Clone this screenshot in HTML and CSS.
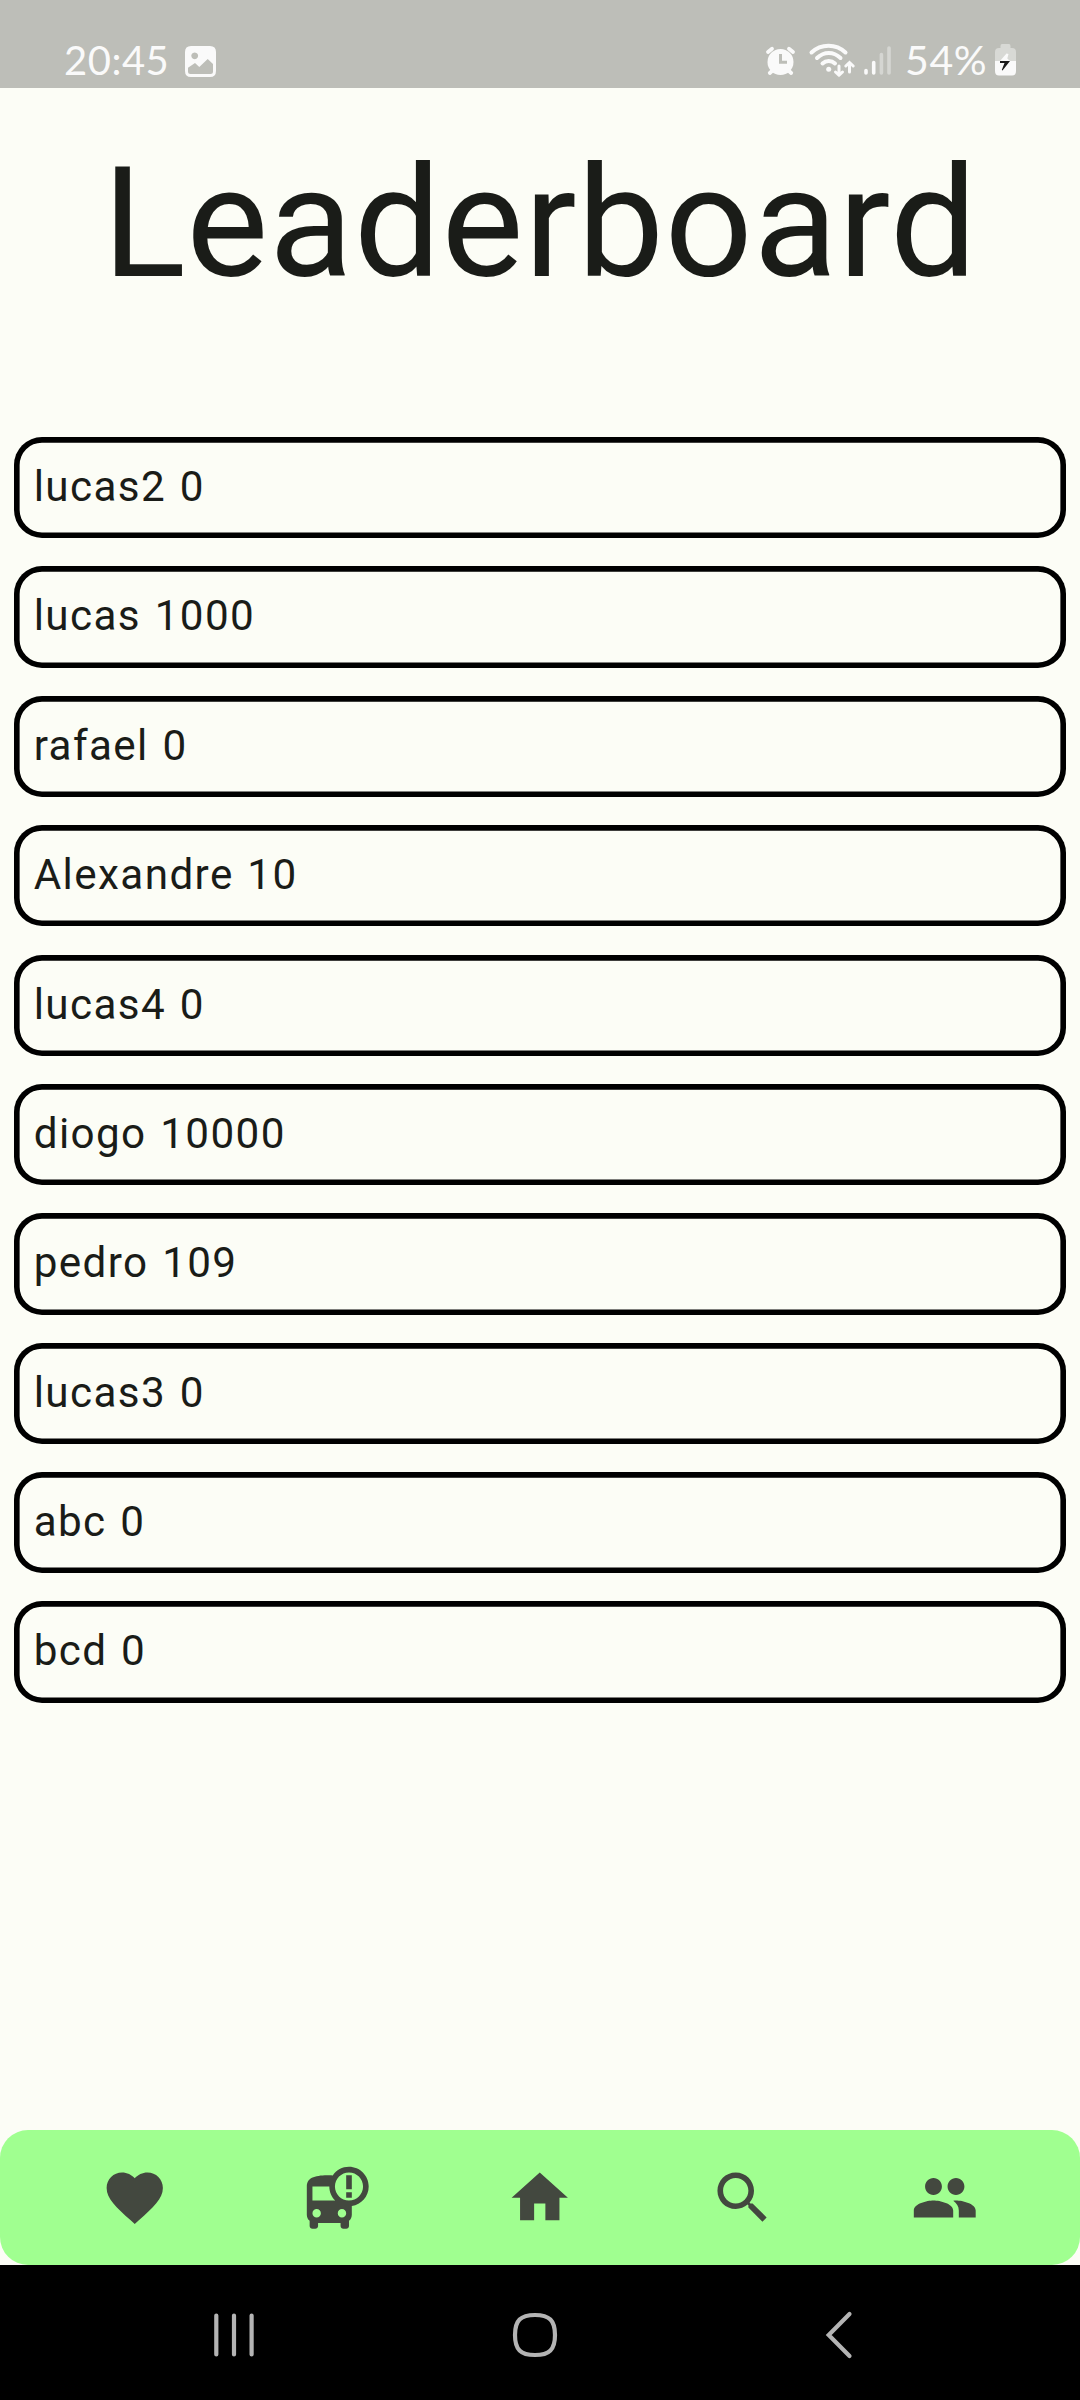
FILE: index.html
```html
<!DOCTYPE html>
<html lang="en">
<head>
<meta charset="utf-8">
<title>Leaderboard</title>
<link rel="stylesheet" href="styles.css">
</head>
<body>
<div class="screen">
  <header class="status">
    <div class="status-left">
      <span class="clock">20:45</span>
      <svg class="picture" width="31" height="31" viewBox="0 0 31 31">
        <path fill="#fafafa" fill-rule="evenodd" d="M6 0H25Q31 0 31 6V25Q31 31 25 31H6Q0 31 0 25V6Q0 0 6 0ZM9.700 6.400a3.400 3.400 0 1 0 .01 0ZM3 21.800V25.500Q3 28 5.500 28H25.500Q28 28 28 25.500V18L22.700 12.900L14.300 20.900L10 17Z"/>
      </svg>
    </div>
    <div class="status-right">
      <svg class="signals" width="128" height="36" viewBox="764 42 128 36" fill="none" stroke="#fafafa" stroke-linecap="round">
        <circle cx="780.500" cy="62" r="13" fill="#fafafa" stroke="none"/>
        <path stroke-width="3.800" d="M768 52L772 48.800M793 52L789 48.800M772 71L769.800 73M789 71L791.200 73"/>
        <path stroke="#bdbeb8" stroke-width="3" stroke-linecap="butt" d="M780.500 54V62.300H787"/>
        <path stroke-width="4" d="M811.500 52.500C821 43.500 836 43.500 845.500 52.500M817 58C824 51.300 833.500 51.300 840.500 58M822.500 63.500C826 60.200 831.500 60.200 835 63.500"/>
        <circle cx="828.700" cy="69.300" r="2.500" fill="#fafafa" stroke="none"/>
        <path stroke-width="3" d="M839 66V75M835.500 72L839 75.300L842.500 72M849.500 72V62.500M845.800 66L849.500 62.500L853.200 66"/>
        <path stroke-width="3.600" d="M866 70.500V73M873.700 62.500V73"/>
        <path stroke="#d5d6d2" stroke-width="3.600" d="M881.400 54.500V73M889 48V73"/>
      </svg>
      <span class="percent">54%</span>
      <svg class="battery" width="21" height="32" viewBox="0 0 21 32">
        <path fill="#d8d9d5" d="M7 0H14Q15.500 0 15.500 2V4H17Q21 4 21 8V17H0V8Q0 4 4 4H5.500V2Q5.500 0 7 0Z"/>
        <path fill="#fafafa" d="M0 17H21V27Q21 31.500 17 31.500H4Q0 31.500 0 27Z"/>
        <path fill="#fafafa" d="M11.500 9.500L5 17H15L12.300 14.500L13.500 10Z"/>
        <path fill="#1b1b1b" d="M5 17H15L7.500 26.500L6.800 26L9.500 19H5Z"/>
      </svg>
    </div>
  </header>
  <main class="content">
    <h1 class="title">Leaderboard</h1>
    <ul class="list">
      <li class="row">lucas2 0</li>
      <li class="row">lucas 1000</li>
      <li class="row">rafael 0</li>
      <li class="row">Alexandre 10</li>
      <li class="row">lucas4 0</li>
      <li class="row">diogo 10000</li>
      <li class="row">pedro 109</li>
      <li class="row">lucas3 0</li>
      <li class="row">abc 0</li>
      <li class="row">bcd 0</li>
    </ul>
  </main>
  <nav class="tabs">
    <a class="tab"><svg class="icon" viewBox="0 0 24 24"><path d="M12 21.350l-1.450-1.320C5.400 15.360 2 12.280 2 8.500 2 5.420 4.420 3 7.500 3c1.740 0 3.410.81 4.500 2.090C13.090 3.810 14.760 3 16.500 3 19.580 3 22 5.420 22 8.500c0 3.780-3.400 6.860-8.550 11.540L12 21.350z"/></svg></a>
    <a class="tab"><svg class="icon" viewBox="0 0 24 24"><path fill-rule="evenodd" d="M16 1c-2.400 0-4.520 1.210-5.780 3.050C9.840 4 9.420 4 9 4c-4.420 0-8 .5-8 4v10c0 .88.39 1.670 1 2.220V22c0 .55.45 1 1 1h1c.55 0 1-.45 1-1v-1h8v1c0 .55.45 1 1 1h1c.55 0 1-.45 1-1v-1.780c.61-.55 1-1.340 1-2.220v-3.080c3.390-.49 6-3.390 6-6.920 0-3.870-3.130-7-7-7zM4.500 19c-.83 0-1.500-.67-1.500-1.500S3.670 16 4.500 16s1.500.67 1.500 1.500S5.330 19 4.500 19zM3 13V8h6c0 1.960.81 3.730 2.110 5H3zm10.500 6c-.83 0-1.500-.67-1.500-1.500s.67-1.500 1.500-1.500 1.500.67 1.500 1.500-.67 1.500-1.500 1.500zM16 13c-2.760 0-5-2.240-5-5s2.240-5 5-5 5 2.240 5 5-2.240 5-5 5zM15 4h2v5h-2zM15 10h2v2h-2z"/></svg></a>
    <a class="tab"><svg class="icon" viewBox="0 0 24 24"><path d="M10 20v-6h4v6h5v-8h3L12 3 2 12h3v8z"/></svg></a>
    <a class="tab"><svg class="icon" viewBox="0 0 24 24"><path d="M15.500 14h-.79l-.28-.27C15.410 12.590 16 11.110 16 9.500 16 5.910 13.090 3 9.500 3S3 5.910 3 9.500 5.910 16 9.500 16c1.610 0 3.090-.59 4.230-1.570l.27.28v.79l5 4.990L20.490 19l-4.990-5zm-6 0C7.010 14 5 11.990 5 9.500S7.010 5 9.500 5 14 7.010 14 9.500 11.990 14 9.500 14z"/></svg></a>
    <a class="tab"><svg class="icon" viewBox="0 0 24 24"><path d="M16 11c1.660 0 2.990-1.340 2.990-3S17.660 5 16 5s-3 1.340-3 3 1.340 3 3 3zM8 11c1.660 0 2.990-1.340 2.990-3S9.660 5 8 5 5 6.340 5 8s1.340 3 3 3zM8 13c-2.330 0-7 1.170-7 3.500V19h14v-2.500c0-2.330-4.670-3.500-7-3.500zM16 13c-.29 0-.62.02-.97.05 1.160.84 1.970 1.970 1.970 3.450V19h6v-2.500c0-2.330-4.670-3.500-7-3.500z"/></svg></a>
  </nav>
  <footer class="system">
    <svg width="40" height="48" viewBox="214 2311 40 48" fill="none" stroke="#b4b4b4" stroke-width="4.200" stroke-linecap="round"><path d="M216.300 2315.500V2354.500M234 2315.500V2354.500M251.600 2315.500V2354.500"/></svg>
    <svg class="home-key" width="48" height="48" viewBox="0 0 48 48" fill="none" stroke="#b4b4b4" stroke-width="4.200"><path d="M24 4C38.500 4 44 9.500 44 24S38.500 44 24 44 4 38.500 4 24 9.500 4 24 4Z"/></svg>
    <svg width="28" height="48" viewBox="0 0 28 48" fill="none" stroke="#b4b4b4" stroke-width="4.200" stroke-linecap="round"><path d="M24.500 3L3.700 24L24.500 45"/></svg>
  </footer>
</div>
</body>
</html>
```
FILE: styles.css
```css
* { box-sizing: border-box; }

body {
  margin: 0;
  background: #fcfdf6;
  color: #1a1c18;
  font-family: Roboto, "Noto Sans", sans-serif;
}

.screen {
  display: flex;
  flex-direction: column;
  width: 1080px;
  height: 2400px;
}

.status {
  display: flex;
  justify-content: space-between;
  height: 88px;
  padding: 0 64px;
  background: #bdbeb8;
  color: #fafafa;
  font: 400 40px/48px Lato, sans-serif;
}

.status-left,
.status-right {
  display: flex;
  align-items: flex-start;
}

.clock { margin-top: 36px; width: 102px; letter-spacing: 0.5px; }
.picture { margin: 46px 0 0 19px; }
.signals { margin-top: 42px; }
.percent { margin: 36px 0 0 13px; width: 81px; font-size: 41px; letter-spacing: 0.6px; }
.battery { margin: 44px 0 0 9px; }

.content { flex: 1; }

.title {
  margin: 45px 0 0;
  height: 304px;
  font-size: 154.7px;
  font-weight: 400;
  line-height: 181px;
  letter-spacing: 0.6px;
  text-align: center;
}

.list {
  display: grid;
  gap: 28.125px;
  margin: 0;
  padding: 0 14px;
  list-style: none;
}

.row {
  height: 101.25px;
  padding-left: 19.7px;
  border-radius: 28px;
  box-shadow: inset 0 0 0 5.625px #000;
  font-size: 42.19px;
  line-height: 100px;
  letter-spacing: 1.4px;
  word-spacing: 1.8px;
}

.tabs {
  display: flex;
  height: 135px;
  padding: 0 33.75px;
  border-radius: 28px;
  background: #a0ff90;
}

.tab {
  display: flex;
  flex: 1;
  align-items: center;
  justify-content: center;
}

.icon {
  width: 67.5px;
  height: 67.5px;
  fill: #43483f;
}

.system {
  display: flex;
  align-items: center;
  justify-content: space-between;
  height: 135px;
  padding: 5px 227px 0 214px;
  background: #000;
}

.home-key { margin-right: 9px; }
```
